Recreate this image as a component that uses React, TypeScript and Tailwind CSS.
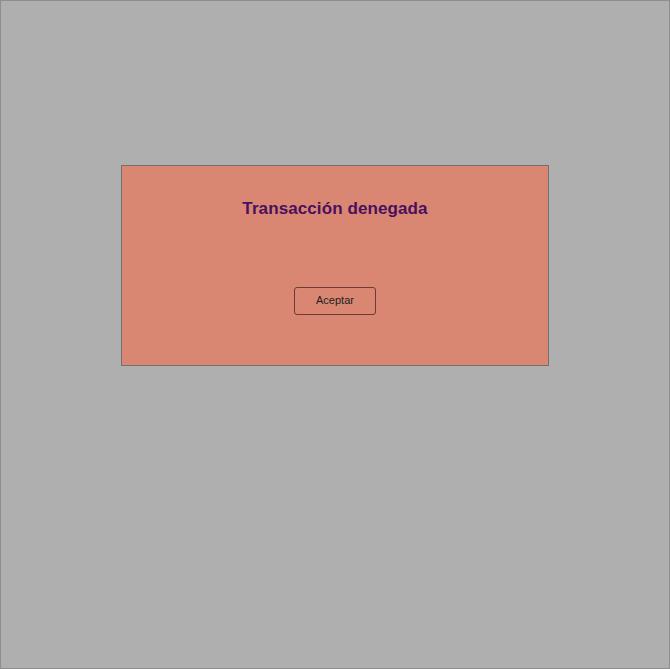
import React from "react";

const App: React.FC = () => {
  return (
    <div className="w-[670px] h-[669px] border border-[#8e8e8e] bg-[#afafaf] flex flex-col items-center pt-[164px] font-['Liberation_Sans',Arial,sans-serif]">
      {/* Dialog */}
      <div className="w-[428px] h-[201px] border border-[#707070] bg-[#d98772] flex flex-col items-center">
        <h1 className="mt-[33px] text-[17px] leading-[20px] font-bold text-[#4a0f5e] tracking-[0.1px]">
          Transacción denegada
        </h1>
        <button className="mt-[68px] w-[82px] h-[28px] pb-[1px] border border-[#6a3c33] rounded-[3px] text-[11px] leading-[13px] text-[#1f1f1f] bg-transparent">
          Aceptar
        </button>
      </div>
    </div>
  );
};

export default App;
